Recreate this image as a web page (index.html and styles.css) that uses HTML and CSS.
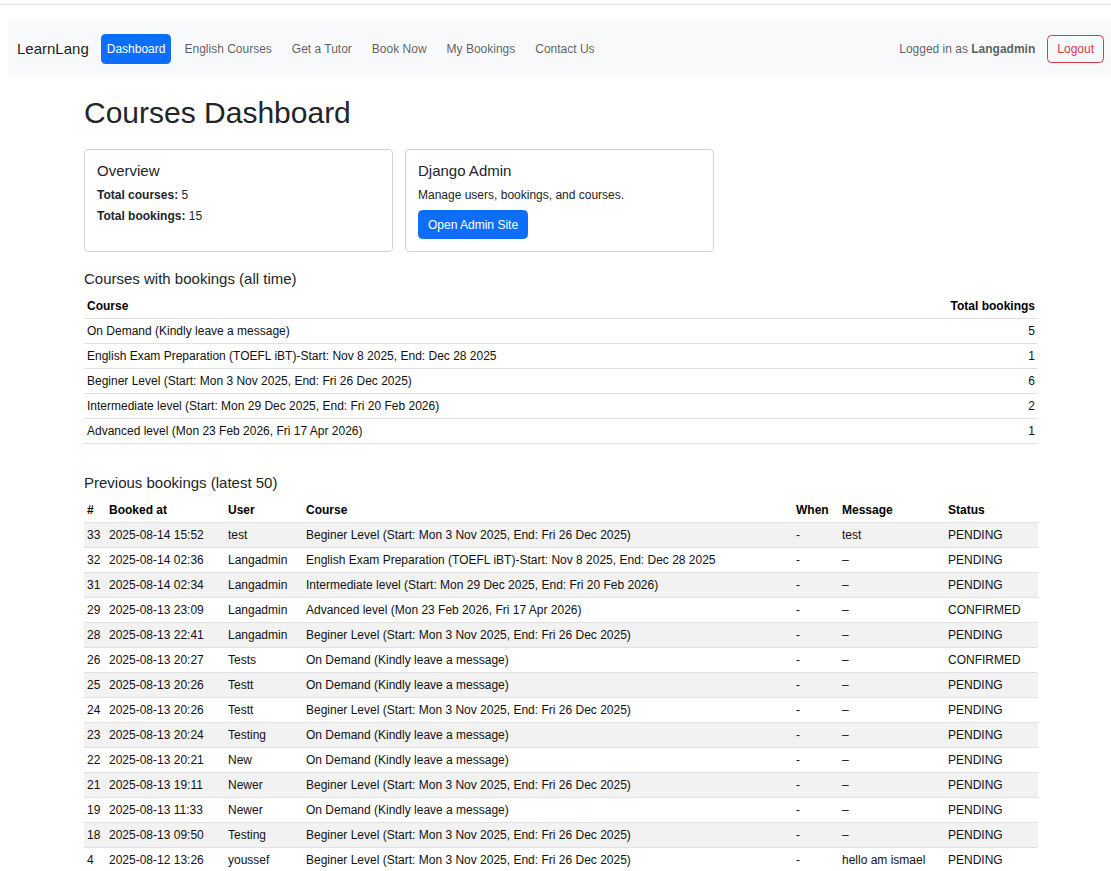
FILE: index.html
```html
<!DOCTYPE html>
<html lang="en">
<head>
<meta charset="utf-8">
<title>Courses Dashboard</title>
<link rel="stylesheet" href="styles.css">
</head>
<body>
<div class="topline"></div>
<nav class="navbar">
  <div class="nav-left">
    <a class="brand" href="#">LearnLang</a>
    <a class="nav-link active" href="#">Dashboard</a>
    <a class="nav-link" href="#">English Courses</a>
    <a class="nav-link" href="#">Get a Tutor</a>
    <a class="nav-link" href="#">Book Now</a>
    <a class="nav-link" href="#">My Bookings</a>
    <a class="nav-link" href="#">Contact Us</a>
  </div>
  <div class="nav-right">
    <span class="nav-text">Logged in as <strong>Langadmin</strong></span>
    <a class="btn-outline-danger" href="#">Logout</a>
  </div>
</nav>

<main class="container">
  <h1 class="page-title">Courses Dashboard</h1>

  <div class="cards">
    <div class="card">
      <h5 class="card-title">Overview</h5>
      <p class="stat"><strong>Total courses:</strong> 5</p>
      <p class="stat"><strong>Total bookings:</strong> 15</p>
    </div>
    <div class="card">
      <h5 class="card-title">Django Admin</h5>
      <p class="card-text">Manage users, bookings, and courses.</p>
      <a class="btn-primary" href="#">Open Admin Site</a>
    </div>
  </div>

  <h5 class="section-title">Courses with bookings (all time)</h5>
  <table class="table">
    <colgroup><col><col class="c-total"></colgroup>
    <thead>
      <tr><th>Course</th><th class="right">Total bookings</th></tr>
    </thead>
    <tbody>
      <tr><td>On Demand (Kindly leave a message)</td><td class="right">5</td></tr>
      <tr><td>English Exam Preparation (TOEFL iBT)-Start: Nov 8 2025, End: Dec 28 2025</td><td class="right">1</td></tr>
      <tr><td>Beginer Level (Start: Mon 3 Nov 2025, End: Fri 26 Dec 2025)</td><td class="right">6</td></tr>
      <tr><td>Intermediate level (Start: Mon 29 Dec 2025, End: Fri 20 Feb 2026)</td><td class="right">2</td></tr>
      <tr><td>Advanced level (Mon 23 Feb 2026, Fri 17 Apr 2026)</td><td class="right">1</td></tr>
    </tbody>
  </table>

  <h5 class="section-title section-gap">Previous bookings (latest 50)</h5>
  <table class="table striped">
    <colgroup>
      <col class="c-num"><col class="c-booked"><col class="c-user"><col class="c-course">
      <col class="c-when"><col class="c-msg"><col class="c-status">
    </colgroup>
    <thead>
      <tr><th>#</th><th>Booked at</th><th>User</th><th>Course</th><th>When</th><th>Message</th><th>Status</th></tr>
    </thead>
    <tbody>
      <tr><td>33</td><td>2025-08-14 15:52</td><td>test</td><td>Beginer Level (Start: Mon 3 Nov 2025, End: Fri 26 Dec 2025)</td><td>-</td><td>test</td><td>PENDING</td></tr>
      <tr><td>32</td><td>2025-08-14 02:36</td><td>Langadmin</td><td>English Exam Preparation (TOEFL iBT)-Start: Nov 8 2025, End: Dec 28 2025</td><td>-</td><td>–</td><td>PENDING</td></tr>
      <tr><td>31</td><td>2025-08-14 02:34</td><td>Langadmin</td><td>Intermediate level (Start: Mon 29 Dec 2025, End: Fri 20 Feb 2026)</td><td>-</td><td>–</td><td>PENDING</td></tr>
      <tr><td>29</td><td>2025-08-13 23:09</td><td>Langadmin</td><td>Advanced level (Mon 23 Feb 2026, Fri 17 Apr 2026)</td><td>-</td><td>–</td><td>CONFIRMED</td></tr>
      <tr><td>28</td><td>2025-08-13 22:41</td><td>Langadmin</td><td>Beginer Level (Start: Mon 3 Nov 2025, End: Fri 26 Dec 2025)</td><td>-</td><td>–</td><td>PENDING</td></tr>
      <tr><td>26</td><td>2025-08-13 20:27</td><td>Tests</td><td>On Demand (Kindly leave a message)</td><td>-</td><td>–</td><td>CONFIRMED</td></tr>
      <tr><td>25</td><td>2025-08-13 20:26</td><td>Testt</td><td>On Demand (Kindly leave a message)</td><td>-</td><td>–</td><td>PENDING</td></tr>
      <tr><td>24</td><td>2025-08-13 20:26</td><td>Testt</td><td>Beginer Level (Start: Mon 3 Nov 2025, End: Fri 26 Dec 2025)</td><td>-</td><td>–</td><td>PENDING</td></tr>
      <tr><td>23</td><td>2025-08-13 20:24</td><td>Testing</td><td>On Demand (Kindly leave a message)</td><td>-</td><td>–</td><td>PENDING</td></tr>
      <tr><td>22</td><td>2025-08-13 20:21</td><td>New</td><td>On Demand (Kindly leave a message)</td><td>-</td><td>–</td><td>PENDING</td></tr>
      <tr><td>21</td><td>2025-08-13 19:11</td><td>Newer</td><td>Beginer Level (Start: Mon 3 Nov 2025, End: Fri 26 Dec 2025)</td><td>-</td><td>–</td><td>PENDING</td></tr>
      <tr><td>19</td><td>2025-08-13 11:33</td><td>Newer</td><td>On Demand (Kindly leave a message)</td><td>-</td><td>–</td><td>PENDING</td></tr>
      <tr><td>18</td><td>2025-08-13 09:50</td><td>Testing</td><td>Beginer Level (Start: Mon 3 Nov 2025, End: Fri 26 Dec 2025)</td><td>-</td><td>–</td><td>PENDING</td></tr>
      <tr><td>4</td><td>2025-08-12 13:26</td><td>youssef</td><td>Beginer Level (Start: Mon 3 Nov 2025, End: Fri 26 Dec 2025)</td><td>-</td><td>hello am ismael</td><td>PENDING</td></tr>
    </tbody>
  </table>
</main>
</body>
</html>
```

FILE: styles.css
```css
* { box-sizing: border-box; }

html, body {
  margin: 0;
  padding: 0;
  background: #fff;
}

body {
  font-family: "Liberation Sans", Arial, Helvetica, sans-serif;
  font-size: 12px;
  line-height: 18px;
  color: #212529;
  overflow-x: hidden;
}

a { text-decoration: none; }

.topline {
  height: 5px;
  border-bottom: 1px solid #e0e0e0;
}

/* Navbar */
.navbar {
  margin: 16px 0 0 8px;
  height: 56px;
  background: #f8f9fa;
  display: flex;
  align-items: center;
  justify-content: space-between;
  padding: 0 7px 0 9px;
}

.nav-left,
.nav-right {
  display: flex;
  align-items: center;
}

.brand {
  font-size: 15px;
  line-height: 22px;
  color: rgba(0, 0, 0, 0.9);
  margin-right: 12px;
}

.nav-link {
  color: rgba(0, 0, 0, 0.65);
  padding: 6px 6px;
  margin-right: 8px;
  border-radius: 4.5px;
  font-size: 12px;
  line-height: 18px;
}

.nav-link.active {
  background: #0d6efd;
  color: #fff;
  margin-right: 7px;
}

.nav-text {
  color: rgba(0, 0, 0, 0.65);
  margin-right: 12px;
}

.nav-text strong { font-weight: bold; }

.btn-outline-danger {
  display: inline-block;
  color: #dc3545;
  border: 1px solid #dc3545;
  border-radius: 4.5px;
  padding: 4px 9px;
  line-height: 18px;
}

/* Main container */
.container {
  width: 954px;
  margin: 0 0 0 84px;
  padding: 0;
}

.page-title {
  margin: 18px 0 18px 0;
  font-size: 30px;
  line-height: 36px;
  font-weight: normal;
  color: #212529;
}

.cards {
  display: flex;
  gap: 12px;
  align-items: stretch;
}

.card {
  width: 309px;
  border: 1px solid rgba(0, 0, 0, 0.175);
  border-radius: 4.5px;
  padding: 12px;
  background: #fff;
}

.card-title {
  margin: 0 0 6px 0;
  font-size: 15px;
  line-height: 18px;
  font-weight: normal;
}

.stat {
  margin: 0 0 3px 0;
}

.card-text {
  margin: 0 0 6px 0;
}

.btn-primary {
  display: inline-block;
  background: #0d6efd;
  color: #fff;
  border: 1px solid #0d6efd;
  border-radius: 4.5px;
  padding: 4.5px 9px;
  line-height: 18px;
}

.section-title {
  margin: 18px 0 6px 0;
  font-size: 15px;
  line-height: 18px;
  font-weight: normal;
}

.section-title.section-gap {
  margin-top: 30px;
}

/* Tables */
.table {
  width: 954px;
  border-collapse: collapse;
  table-layout: fixed;
  margin-bottom: 12px;
}

.table th,
.table td {
  padding: 3px 3px;
  line-height: 18px;
  text-align: left;
  vertical-align: top;
  border-bottom: 1px solid #dee2e6;
  white-space: nowrap;
  overflow: hidden;
}

.table th {
  font-weight: bold;
  color: #000;
}

.table td { color: #111; }

.table .right { text-align: right; }

.c-total { width: 160px; }

.c-num { width: 22px; }
.c-booked { width: 119px; }
.c-user { width: 78px; }
.c-course { width: 490px; }
.c-when { width: 46px; }
.c-msg { width: 106px; }
.c-status { width: 93px; }

.striped tbody tr:nth-child(odd) td {
  background: #f2f2f2;
}
```
